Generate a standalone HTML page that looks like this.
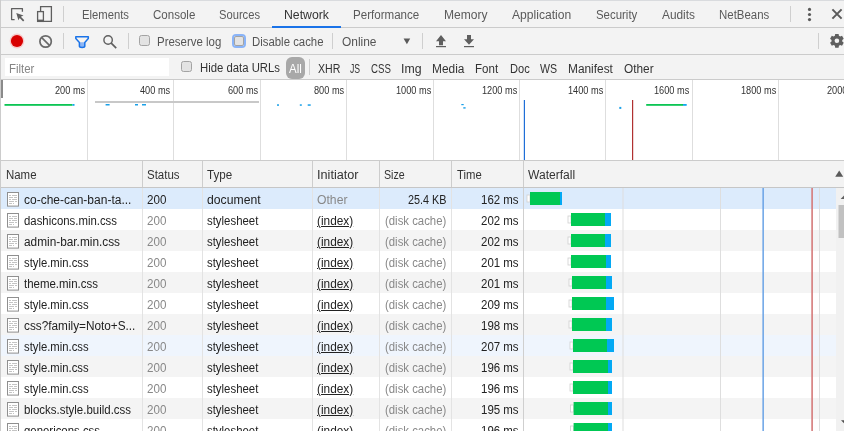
<!DOCTYPE html>
<html><head><meta charset="utf-8"><title>Network</title>
<style>
html,body{margin:0;padding:0}
body{width:844px;height:431px;overflow:hidden;position:relative;background:#fff;font-family:"Liberation Sans",sans-serif}
.a{position:absolute}
.t{position:absolute;white-space:pre;transform-origin:0 0;line-height:normal;font-family:"Liberation Sans",sans-serif}
#tx{position:absolute;left:0;top:0;width:844px;height:431px;will-change:transform}
</style></head><body>
<svg class="a" style="left:0;top:0" width="844" height="431" viewBox="0 0 844 431"><rect x="0" y="0" width="844" height="80" fill="#f3f3f3" />
<rect x="0" y="0" width="844" height="1" fill="#d9dbde" />
<rect x="0" y="27" width="844" height="1" fill="#cbcbcb" />
<rect x="0" y="54" width="844" height="1" fill="#cbcbcb" />
<rect x="0" y="79" width="844" height="1" fill="#cbcbcb" />
<rect x="0" y="80" width="844" height="80" fill="#ffffff" />
<rect x="0" y="160" width="844" height="1" fill="#cbcbcb" />
<rect x="0" y="161" width="844" height="26" fill="#f3f3f3" />
<rect x="0" y="187" width="844" height="1" fill="#c6c6c6" />
<rect x="0" y="188" width="836" height="21" fill="#dcebfc" />
<rect x="0" y="209" width="836" height="21" fill="#ffffff" />
<rect x="0" y="230" width="836" height="21" fill="#f4f4f4" />
<rect x="0" y="251" width="836" height="21" fill="#ffffff" />
<rect x="0" y="272" width="836" height="21" fill="#f4f4f4" />
<rect x="0" y="293" width="836" height="21" fill="#ffffff" />
<rect x="0" y="314" width="836" height="21" fill="#f4f4f4" />
<rect x="0" y="335" width="836" height="21" fill="#eff5fd" />
<rect x="0" y="356" width="836" height="21" fill="#f4f4f4" />
<rect x="0" y="377" width="836" height="21" fill="#ffffff" />
<rect x="0" y="398" width="836" height="21" fill="#f4f4f4" />
<rect x="0" y="419" width="836" height="21" fill="#ffffff" />
<rect x="0" y="0" width="1" height="431" fill="#cccccc" />
<rect x="63" y="6" width="1" height="16" fill="#cfcfcf" />
<rect x="790" y="6" width="1" height="16" fill="#cfcfcf" />
<rect x="63" y="33" width="1" height="16" fill="#cfcfcf" />
<rect x="128" y="33" width="1" height="16" fill="#cfcfcf" />
<rect x="332" y="33" width="1" height="16" fill="#cfcfcf" />
<rect x="422" y="33" width="1" height="16" fill="#cfcfcf" />
<rect x="818" y="33" width="1" height="16" fill="#cfcfcf" />
<rect x="309" y="59" width="1" height="16" fill="#cfcfcf" />
<rect x="272" y="26" width="69" height="2" fill="#1a73e8" />
<path d="M14.6 19.6 H11.6 V8.6 H22.4 V11.8" fill="none" stroke="#5f5f5f" stroke-width="1.3" stroke-linejoin="round"/>
<path d="M16.3 13 L23.5 15.4 L20.9 16.8 L24.3 20.2 L23.1 21.4 L19.7 18 L18.4 20.2 Z" fill="#5f5f5f"/>
<path d="M40.6 11.2 V6.6 H51.4 V21.4 H43.8" fill="none" stroke="#5f5f5f" stroke-width="1.3"/>
<rect x="37.6" y="11.6" width="5.8" height="9.8" fill="none" stroke="#5f5f5f" stroke-width="1.3"/>
<rect x="37" y="19.6" width="7" height="2.4" fill="#5f5f5f" />
<circle cx="809.5" cy="9.4" r="1.6" fill="#5a5a5a"/>
<circle cx="809.5" cy="14.5" r="1.6" fill="#5a5a5a"/>
<circle cx="809.5" cy="19.6" r="1.6" fill="#5a5a5a"/>
<path d="M832.4 9.4 L841.6 18.6 M841.6 9.4 L832.4 18.6" stroke="#5a5a5a" stroke-width="2"/>
<circle cx="17" cy="41" r="7.4" fill="#f6caca"/>
<circle cx="17" cy="41" r="6.1" fill="#d80000"/>
<circle cx="45.6" cy="41.5" r="5.7" fill="none" stroke="#6a6a6a" stroke-width="1.7"/>
<path d="M41.7 37.6 L49.5 45.4" stroke="#6a6a6a" stroke-width="1.7"/>
<path d="M75.9 38.6 H88.3 L84.8 42.4 H79.4 Z" fill="#f8f4ee"/><path d="M79.4 42.2 V46.2 Q79.4 47.4 82.1 47.4 Q84.8 47.4 84.8 46.2 V42.2 Z" fill="#8db6f5"/>
<path d="M75.8 36.7 H88.3 V38.6 L84.8 42.4 V46.2 Q84.8 47.4 82.1 47.4 Q79.4 47.4 79.4 46.2 V42.4 L75.8 38.6 Z" fill="none" stroke="#1a73e8" stroke-width="1.5" stroke-linejoin="round"/>
<circle cx="108.1" cy="40" r="4.2" fill="none" stroke="#5f5f5f" stroke-width="1.4"/>
<path d="M111.2 43.1 L116.2 48.1" stroke="#5f5f5f" stroke-width="1.7"/>
<rect x="139.5" y="35.5" width="10" height="10" rx="2" fill="#e3e3e3" stroke="#a3a3a3" stroke-width="1"/>
<rect x="233" y="35" width="12" height="12" rx="3" fill="none" stroke="#8ab4f8" stroke-width="2"/>
<rect x="234.5" y="36.5" width="9" height="9" rx="1.5" fill="#e3e3e3" stroke="#a3a3a3" stroke-width="1"/>
<rect x="181.5" y="61.5" width="10" height="10" rx="2" fill="#e3e3e3" stroke="#a3a3a3" stroke-width="1"/>
<path d="M403.6 38.4 H410.2 L406.9 44.2 Z" fill="#5a5a5a"/>
<path d="M436 41.2 L441 35 L446 41.2 H443 V45.2 H439 V41.2 Z" fill="#5f5f5f"/>
<rect x="436" y="46" width="10" height="1.2" fill="#5f5f5f" />
<path d="M467 35 H471 V39.2 H474 L469 44.8 L464 39.2 H467 Z" fill="#5f5f5f"/>
<rect x="464" y="46" width="10" height="1.2" fill="#5f5f5f" />
<path d="M835.18 33.91 L838.62 33.91 L838.92 35.79 L840.22 36.54 L842.01 35.87 L843.72 38.84 L842.25 40.05 L842.25 41.55 L843.72 42.76 L842.01 45.73 L840.22 45.06 L838.92 45.81 L838.62 47.69 L835.18 47.69 L834.88 45.81 L833.58 45.06 L831.79 45.73 L830.08 42.76 L831.55 41.55 L831.55 40.05 L830.08 38.84 L831.79 35.87 L833.58 36.54 L834.88 35.79 Z" fill="#5f5f5f"/>
<circle cx="836.9" cy="40.8" r="2.3" fill="#f3f3f3"/>
<rect x="5" y="58" width="164" height="18" fill="#ffffff" />
<rect x="286" y="57" width="19" height="22" rx="6" fill="#a8a8a8"/>
<rect x="87" y="80" width="1" height="80" fill="#dedede" />
<rect x="173" y="80" width="1" height="80" fill="#dedede" />
<rect x="260" y="80" width="1" height="80" fill="#dedede" />
<rect x="346" y="80" width="1" height="80" fill="#dedede" />
<rect x="433" y="80" width="1" height="80" fill="#dedede" />
<rect x="519" y="80" width="1" height="80" fill="#dedede" />
<rect x="605" y="80" width="1" height="80" fill="#dedede" />
<rect x="692" y="80" width="1" height="80" fill="#dedede" />
<rect x="778" y="80" width="1" height="80" fill="#dedede" />
<rect x="1" y="80" width="2" height="18" fill="#8a8a8a" />
<rect x="4.5" y="104" width="68" height="1.8" fill="#0cc554" />
<rect x="72.5" y="104" width="2" height="1.8" fill="#10a6f0" />
<rect x="95" y="101" width="164" height="2" fill="#c8c8c8" />
<rect x="105.6" y="104" width="4" height="1.5" fill="#1aa0e8" />
<rect x="135" y="104" width="3" height="1.5" fill="#1aa0e8" />
<rect x="142" y="104" width="4" height="1.5" fill="#1aa0e8" />
<rect x="277" y="104.3" width="2" height="1.5" fill="#1aa0e8" />
<rect x="299.8" y="104.3" width="2" height="1.5" fill="#1aa0e8" />
<rect x="307.7" y="104.3" width="3" height="1.5" fill="#1aa0e8" />
<rect x="461.3" y="104" width="2.4" height="1.2" fill="#1aa0e8" />
<rect x="463.3" y="107.2" width="2.3" height="1.4" fill="#1aa0e8" />
<rect x="619.3" y="106.9" width="2" height="2" fill="#1aa0e8" />
<rect x="523.8" y="100" width="1.2" height="60" fill="#1f6fd8" />
<rect x="632" y="100" width="1.2" height="60" fill="#b03030" />
<rect x="646.2" y="104" width="36.8" height="1.8" fill="#0cc554" />
<rect x="683" y="104" width="3.7" height="1.8" fill="#10a6f0" />
<rect x="142" y="161" width="1" height="26" fill="#cdcdcd" />
<rect x="142" y="188" width="1" height="243" fill="#e3e3e3" />
<rect x="202" y="161" width="1" height="26" fill="#cdcdcd" />
<rect x="202" y="188" width="1" height="243" fill="#e3e3e3" />
<rect x="312" y="161" width="1" height="26" fill="#cdcdcd" />
<rect x="312" y="188" width="1" height="243" fill="#e3e3e3" />
<rect x="379" y="161" width="1" height="26" fill="#cdcdcd" />
<rect x="379" y="188" width="1" height="243" fill="#e3e3e3" />
<rect x="451" y="161" width="1" height="26" fill="#cdcdcd" />
<rect x="451" y="188" width="1" height="243" fill="#e3e3e3" />
<rect x="523" y="161" width="1" height="26" fill="#cdcdcd" />
<rect x="523" y="188" width="1" height="243" fill="#cfcfcf" />
<rect x="622.5" y="188" width="1" height="243" fill="#dedede" />
<rect x="720" y="188" width="1" height="243" fill="#dedede" />
<rect x="819" y="188" width="1" height="243" fill="#dedede" />
<rect x="762.4" y="188" width="1.5" height="243" fill="#6aa3e6" />
<rect x="811.3" y="188" width="1.6" height="243" fill="#d57b7b" />
<path d="M835.2 176.7 L839.2 170.4 L843.2 176.7 Z" fill="#5a5a5a"/>
<rect x="836" y="188" width="8" height="243" fill="#f1f1f1" />
<path d="M840.6 199 L844.2 195.4 L847.8 199 Z" fill="#606060"/>
<rect x="838.5" y="205" width="5.5" height="33" fill="#c1c1c1" />
<path d="M841 420.2 H844 V423.2 Z" fill="#505050"/>
<rect x="527" y="195" width="3" height="7" fill="#ffffff" stroke="#cfcfcf" stroke-width="0.8"/>
<rect x="530" y="192" width="30" height="13" fill="#00c853" />
<rect x="560" y="192" width="2" height="13" fill="#03a9f4" />
<rect x="568" y="216" width="3" height="7" fill="#ffffff" stroke="#cfcfcf" stroke-width="0.8"/>
<rect x="571" y="213" width="34" height="13" fill="#00c853" />
<rect x="605" y="213" width="6" height="13" fill="#03a9f4" />
<rect x="568" y="237" width="3" height="7" fill="#ffffff" stroke="#cfcfcf" stroke-width="0.8"/>
<rect x="571" y="234" width="34" height="13" fill="#00c853" />
<rect x="605" y="234" width="6" height="13" fill="#03a9f4" />
<rect x="568" y="258" width="3" height="7" fill="#ffffff" stroke="#cfcfcf" stroke-width="0.8"/>
<rect x="571" y="255" width="35" height="13" fill="#00c853" />
<rect x="606" y="255" width="5" height="13" fill="#03a9f4" />
<rect x="569" y="279" width="3" height="7" fill="#ffffff" stroke="#cfcfcf" stroke-width="0.8"/>
<rect x="572" y="276" width="34" height="13" fill="#00c853" />
<rect x="606" y="276" width="6" height="13" fill="#03a9f4" />
<rect x="569" y="300" width="3" height="7" fill="#ffffff" stroke="#cfcfcf" stroke-width="0.8"/>
<rect x="572" y="297" width="34" height="13" fill="#00c853" />
<rect x="606" y="297" width="8" height="13" fill="#03a9f4" />
<rect x="569" y="321" width="3" height="7" fill="#ffffff" stroke="#cfcfcf" stroke-width="0.8"/>
<rect x="572" y="318" width="34" height="13" fill="#00c853" />
<rect x="606" y="318" width="6" height="13" fill="#03a9f4" />
<rect x="570" y="342" width="3" height="7" fill="#ffffff" stroke="#cfcfcf" stroke-width="0.8"/>
<rect x="573" y="339" width="34" height="13" fill="#00c853" />
<rect x="607" y="339" width="7" height="13" fill="#03a9f4" />
<rect x="570" y="363" width="3" height="7" fill="#ffffff" stroke="#cfcfcf" stroke-width="0.8"/>
<rect x="573" y="360" width="35" height="13" fill="#00c853" />
<rect x="608" y="360" width="4" height="13" fill="#03a9f4" />
<rect x="570" y="384" width="3" height="7" fill="#ffffff" stroke="#cfcfcf" stroke-width="0.8"/>
<rect x="573" y="381" width="35" height="13" fill="#00c853" />
<rect x="608" y="381" width="4" height="13" fill="#03a9f4" />
<rect x="570.6" y="405" width="3" height="7" fill="#ffffff" stroke="#cfcfcf" stroke-width="0.8"/>
<rect x="573.6" y="402" width="34.39999999999998" height="13" fill="#00c853" />
<rect x="608" y="402" width="4" height="13" fill="#03a9f4" />
<rect x="570.6" y="426" width="3" height="7" fill="#ffffff" stroke="#cfcfcf" stroke-width="0.8"/>
<rect x="573.6" y="423" width="34.39999999999998" height="13" fill="#00c853" />
<rect x="608" y="423" width="4" height="13" fill="#03a9f4" />
<rect x="7.5" y="192.5" width="11" height="13.6" fill="#ffffff" stroke="#8f8f8f" stroke-width="1"/>
<rect x="9.0" y="195.0" width="2.0" height="1" fill="#c4c4c4" />
<rect x="12.0" y="195.0" width="5.0" height="1" fill="#c4c4c4" />
<rect x="9.0" y="197.0" width="4.0" height="1" fill="#c4c4c4" />
<rect x="14.0" y="197.0" width="3.0" height="1" fill="#c4c4c4" />
<rect x="9.0" y="199.0" width="2.0" height="1" fill="#c4c4c4" />
<rect x="12.0" y="199.0" width="5.0" height="1" fill="#c4c4c4" />
<rect x="9.0" y="201.0" width="5.0" height="1" fill="#c4c4c4" />
<rect x="15.0" y="201.0" width="2.0" height="1" fill="#c4c4c4" />
<rect x="9.0" y="203.0" width="3.0" height="1" fill="#c4c4c4" />
<rect x="13.0" y="203.0" width="1.0" height="1" fill="#c4c4c4" />
<rect x="7.5" y="213.5" width="11" height="13.6" fill="#ffffff" stroke="#8f8f8f" stroke-width="1"/>
<rect x="9.0" y="216.0" width="2.0" height="1" fill="#c4c4c4" />
<rect x="12.0" y="216.0" width="5.0" height="1" fill="#c4c4c4" />
<rect x="9.0" y="218.0" width="4.0" height="1" fill="#c4c4c4" />
<rect x="14.0" y="218.0" width="3.0" height="1" fill="#c4c4c4" />
<rect x="9.0" y="220.0" width="2.0" height="1" fill="#c4c4c4" />
<rect x="12.0" y="220.0" width="5.0" height="1" fill="#c4c4c4" />
<rect x="9.0" y="222.0" width="5.0" height="1" fill="#c4c4c4" />
<rect x="15.0" y="222.0" width="2.0" height="1" fill="#c4c4c4" />
<rect x="9.0" y="224.0" width="3.0" height="1" fill="#c4c4c4" />
<rect x="13.0" y="224.0" width="1.0" height="1" fill="#c4c4c4" />
<rect x="7.5" y="234.5" width="11" height="13.6" fill="#ffffff" stroke="#8f8f8f" stroke-width="1"/>
<rect x="9.0" y="237.0" width="2.0" height="1" fill="#c4c4c4" />
<rect x="12.0" y="237.0" width="5.0" height="1" fill="#c4c4c4" />
<rect x="9.0" y="239.0" width="4.0" height="1" fill="#c4c4c4" />
<rect x="14.0" y="239.0" width="3.0" height="1" fill="#c4c4c4" />
<rect x="9.0" y="241.0" width="2.0" height="1" fill="#c4c4c4" />
<rect x="12.0" y="241.0" width="5.0" height="1" fill="#c4c4c4" />
<rect x="9.0" y="243.0" width="5.0" height="1" fill="#c4c4c4" />
<rect x="15.0" y="243.0" width="2.0" height="1" fill="#c4c4c4" />
<rect x="9.0" y="245.0" width="3.0" height="1" fill="#c4c4c4" />
<rect x="13.0" y="245.0" width="1.0" height="1" fill="#c4c4c4" />
<rect x="7.5" y="255.5" width="11" height="13.6" fill="#ffffff" stroke="#8f8f8f" stroke-width="1"/>
<rect x="9.0" y="258.0" width="2.0" height="1" fill="#c4c4c4" />
<rect x="12.0" y="258.0" width="5.0" height="1" fill="#c4c4c4" />
<rect x="9.0" y="260.0" width="4.0" height="1" fill="#c4c4c4" />
<rect x="14.0" y="260.0" width="3.0" height="1" fill="#c4c4c4" />
<rect x="9.0" y="262.0" width="2.0" height="1" fill="#c4c4c4" />
<rect x="12.0" y="262.0" width="5.0" height="1" fill="#c4c4c4" />
<rect x="9.0" y="264.0" width="5.0" height="1" fill="#c4c4c4" />
<rect x="15.0" y="264.0" width="2.0" height="1" fill="#c4c4c4" />
<rect x="9.0" y="266.0" width="3.0" height="1" fill="#c4c4c4" />
<rect x="13.0" y="266.0" width="1.0" height="1" fill="#c4c4c4" />
<rect x="7.5" y="276.5" width="11" height="13.6" fill="#ffffff" stroke="#8f8f8f" stroke-width="1"/>
<rect x="9.0" y="279.0" width="2.0" height="1" fill="#c4c4c4" />
<rect x="12.0" y="279.0" width="5.0" height="1" fill="#c4c4c4" />
<rect x="9.0" y="281.0" width="4.0" height="1" fill="#c4c4c4" />
<rect x="14.0" y="281.0" width="3.0" height="1" fill="#c4c4c4" />
<rect x="9.0" y="283.0" width="2.0" height="1" fill="#c4c4c4" />
<rect x="12.0" y="283.0" width="5.0" height="1" fill="#c4c4c4" />
<rect x="9.0" y="285.0" width="5.0" height="1" fill="#c4c4c4" />
<rect x="15.0" y="285.0" width="2.0" height="1" fill="#c4c4c4" />
<rect x="9.0" y="287.0" width="3.0" height="1" fill="#c4c4c4" />
<rect x="13.0" y="287.0" width="1.0" height="1" fill="#c4c4c4" />
<rect x="7.5" y="297.5" width="11" height="13.6" fill="#ffffff" stroke="#8f8f8f" stroke-width="1"/>
<rect x="9.0" y="300.0" width="2.0" height="1" fill="#c4c4c4" />
<rect x="12.0" y="300.0" width="5.0" height="1" fill="#c4c4c4" />
<rect x="9.0" y="302.0" width="4.0" height="1" fill="#c4c4c4" />
<rect x="14.0" y="302.0" width="3.0" height="1" fill="#c4c4c4" />
<rect x="9.0" y="304.0" width="2.0" height="1" fill="#c4c4c4" />
<rect x="12.0" y="304.0" width="5.0" height="1" fill="#c4c4c4" />
<rect x="9.0" y="306.0" width="5.0" height="1" fill="#c4c4c4" />
<rect x="15.0" y="306.0" width="2.0" height="1" fill="#c4c4c4" />
<rect x="9.0" y="308.0" width="3.0" height="1" fill="#c4c4c4" />
<rect x="13.0" y="308.0" width="1.0" height="1" fill="#c4c4c4" />
<rect x="7.5" y="318.5" width="11" height="13.6" fill="#ffffff" stroke="#8f8f8f" stroke-width="1"/>
<rect x="9.0" y="321.0" width="2.0" height="1" fill="#c4c4c4" />
<rect x="12.0" y="321.0" width="5.0" height="1" fill="#c4c4c4" />
<rect x="9.0" y="323.0" width="4.0" height="1" fill="#c4c4c4" />
<rect x="14.0" y="323.0" width="3.0" height="1" fill="#c4c4c4" />
<rect x="9.0" y="325.0" width="2.0" height="1" fill="#c4c4c4" />
<rect x="12.0" y="325.0" width="5.0" height="1" fill="#c4c4c4" />
<rect x="9.0" y="327.0" width="5.0" height="1" fill="#c4c4c4" />
<rect x="15.0" y="327.0" width="2.0" height="1" fill="#c4c4c4" />
<rect x="9.0" y="329.0" width="3.0" height="1" fill="#c4c4c4" />
<rect x="13.0" y="329.0" width="1.0" height="1" fill="#c4c4c4" />
<rect x="7.5" y="339.5" width="11" height="13.6" fill="#ffffff" stroke="#8f8f8f" stroke-width="1"/>
<rect x="9.0" y="342.0" width="2.0" height="1" fill="#c4c4c4" />
<rect x="12.0" y="342.0" width="5.0" height="1" fill="#c4c4c4" />
<rect x="9.0" y="344.0" width="4.0" height="1" fill="#c4c4c4" />
<rect x="14.0" y="344.0" width="3.0" height="1" fill="#c4c4c4" />
<rect x="9.0" y="346.0" width="2.0" height="1" fill="#c4c4c4" />
<rect x="12.0" y="346.0" width="5.0" height="1" fill="#c4c4c4" />
<rect x="9.0" y="348.0" width="5.0" height="1" fill="#c4c4c4" />
<rect x="15.0" y="348.0" width="2.0" height="1" fill="#c4c4c4" />
<rect x="9.0" y="350.0" width="3.0" height="1" fill="#c4c4c4" />
<rect x="13.0" y="350.0" width="1.0" height="1" fill="#c4c4c4" />
<rect x="7.5" y="360.5" width="11" height="13.6" fill="#ffffff" stroke="#8f8f8f" stroke-width="1"/>
<rect x="9.0" y="363.0" width="2.0" height="1" fill="#c4c4c4" />
<rect x="12.0" y="363.0" width="5.0" height="1" fill="#c4c4c4" />
<rect x="9.0" y="365.0" width="4.0" height="1" fill="#c4c4c4" />
<rect x="14.0" y="365.0" width="3.0" height="1" fill="#c4c4c4" />
<rect x="9.0" y="367.0" width="2.0" height="1" fill="#c4c4c4" />
<rect x="12.0" y="367.0" width="5.0" height="1" fill="#c4c4c4" />
<rect x="9.0" y="369.0" width="5.0" height="1" fill="#c4c4c4" />
<rect x="15.0" y="369.0" width="2.0" height="1" fill="#c4c4c4" />
<rect x="9.0" y="371.0" width="3.0" height="1" fill="#c4c4c4" />
<rect x="13.0" y="371.0" width="1.0" height="1" fill="#c4c4c4" />
<rect x="7.5" y="381.5" width="11" height="13.6" fill="#ffffff" stroke="#8f8f8f" stroke-width="1"/>
<rect x="9.0" y="384.0" width="2.0" height="1" fill="#c4c4c4" />
<rect x="12.0" y="384.0" width="5.0" height="1" fill="#c4c4c4" />
<rect x="9.0" y="386.0" width="4.0" height="1" fill="#c4c4c4" />
<rect x="14.0" y="386.0" width="3.0" height="1" fill="#c4c4c4" />
<rect x="9.0" y="388.0" width="2.0" height="1" fill="#c4c4c4" />
<rect x="12.0" y="388.0" width="5.0" height="1" fill="#c4c4c4" />
<rect x="9.0" y="390.0" width="5.0" height="1" fill="#c4c4c4" />
<rect x="15.0" y="390.0" width="2.0" height="1" fill="#c4c4c4" />
<rect x="9.0" y="392.0" width="3.0" height="1" fill="#c4c4c4" />
<rect x="13.0" y="392.0" width="1.0" height="1" fill="#c4c4c4" />
<rect x="7.5" y="402.5" width="11" height="13.6" fill="#ffffff" stroke="#8f8f8f" stroke-width="1"/>
<rect x="9.0" y="405.0" width="2.0" height="1" fill="#c4c4c4" />
<rect x="12.0" y="405.0" width="5.0" height="1" fill="#c4c4c4" />
<rect x="9.0" y="407.0" width="4.0" height="1" fill="#c4c4c4" />
<rect x="14.0" y="407.0" width="3.0" height="1" fill="#c4c4c4" />
<rect x="9.0" y="409.0" width="2.0" height="1" fill="#c4c4c4" />
<rect x="12.0" y="409.0" width="5.0" height="1" fill="#c4c4c4" />
<rect x="9.0" y="411.0" width="5.0" height="1" fill="#c4c4c4" />
<rect x="15.0" y="411.0" width="2.0" height="1" fill="#c4c4c4" />
<rect x="9.0" y="413.0" width="3.0" height="1" fill="#c4c4c4" />
<rect x="13.0" y="413.0" width="1.0" height="1" fill="#c4c4c4" />
<rect x="7.5" y="423.5" width="11" height="13.6" fill="#ffffff" stroke="#8f8f8f" stroke-width="1"/>
<rect x="9.0" y="426.0" width="2.0" height="1" fill="#c4c4c4" />
<rect x="12.0" y="426.0" width="5.0" height="1" fill="#c4c4c4" />
<rect x="9.0" y="428.0" width="4.0" height="1" fill="#c4c4c4" />
<rect x="14.0" y="428.0" width="3.0" height="1" fill="#c4c4c4" />
<rect x="9.0" y="430.0" width="2.0" height="1" fill="#c4c4c4" />
<rect x="12.0" y="430.0" width="5.0" height="1" fill="#c4c4c4" />
<rect x="9.0" y="432.0" width="5.0" height="1" fill="#c4c4c4" />
<rect x="15.0" y="432.0" width="2.0" height="1" fill="#c4c4c4" />
<rect x="9.0" y="434.0" width="3.0" height="1" fill="#c4c4c4" />
<rect x="13.0" y="434.0" width="1.0" height="1" fill="#c4c4c4" /></svg>
<div id="tx">
<div class=t style='left:82.00px;top:8.00px;font-size:12px;color:#5a5a5a;transform:scaleX(0.9394);'>Elements</div>
<div class=t style='left:152.60px;top:8.00px;font-size:12px;color:#5a5a5a;transform:scaleX(0.9607);'>Console</div>
<div class=t style='left:218.60px;top:8.00px;font-size:12px;color:#5a5a5a;transform:scaleX(0.9312);'>Sources</div>
<div class=t style='left:283.80px;top:8.00px;font-size:12px;color:#333;transform:scaleX(1.0201);'>Network</div>
<div class=t style='left:352.80px;top:8.00px;font-size:12px;color:#5a5a5a;transform:scaleX(0.9650);'>Performance</div>
<div class=t style='left:444.20px;top:8.00px;font-size:12px;color:#5a5a5a;transform:scaleX(1.0036);'>Memory</div>
<div class=t style='left:512.10px;top:8.00px;font-size:12px;color:#5a5a5a;transform:scaleX(1.0082);'>Application</div>
<div class=t style='left:596.00px;top:8.00px;font-size:12px;color:#5a5a5a;transform:scaleX(0.9525);'>Security</div>
<div class=t style='left:662.20px;top:8.00px;font-size:12px;color:#5a5a5a;transform:scaleX(0.9892);'>Audits</div>
<div class=t style='left:718.70px;top:8.00px;font-size:12px;color:#5a5a5a;transform:scaleX(0.9544);'>NetBeans</div>
<div class=t style='left:157.40px;top:34.60px;font-size:12px;color:#555;transform:scaleX(0.9544);'>Preserve log</div>
<div class=t style='left:251.60px;top:34.60px;font-size:12px;color:#555;transform:scaleX(0.9486);'>Disable cache</div>
<div class=t style='left:342.30px;top:35.00px;font-size:12px;color:#555;transform:scaleX(0.9946);'>Online</div>
<div class=t style='left:8.70px;top:62.00px;font-size:12px;color:#858585;transform:scaleX(0.9523);'>Filter</div>
<div class=t style='left:199.60px;top:61.00px;font-size:12px;color:#333;transform:scaleX(0.9443);'>Hide data URLs</div>
<div class=t style='left:289.20px;top:62.00px;font-size:12px;color:#fff;transform:scaleX(0.9593);'>All</div>
<div class=t style='left:317.80px;top:62.00px;font-size:12px;color:#333;transform:scaleX(0.8838);'>XHR</div>
<div class=t style='left:350.40px;top:62.00px;font-size:12px;color:#333;transform:scaleX(0.7206);'>JS</div>
<div class=t style='left:371.30px;top:62.00px;font-size:12px;color:#333;transform:scaleX(0.8061);'>CSS</div>
<div class=t style='left:401.00px;top:62.00px;font-size:12px;color:#333;transform:scaleX(1.0242);'>Img</div>
<div class=t style='left:432.30px;top:62.00px;font-size:12px;color:#333;transform:scaleX(0.9912);'>Media</div>
<div class=t style='left:475.20px;top:62.00px;font-size:12px;color:#333;transform:scaleX(0.9619);'>Font</div>
<div class=t style='left:509.50px;top:62.00px;font-size:12px;color:#333;transform:scaleX(0.9230);'>Doc</div>
<div class=t style='left:539.70px;top:62.00px;font-size:12px;color:#333;transform:scaleX(0.8840);'>WS</div>
<div class=t style='left:567.90px;top:62.00px;font-size:12px;color:#333;transform:scaleX(0.9899);'>Manifest</div>
<div class=t style='left:623.50px;top:62.00px;font-size:12px;color:#333;transform:scaleX(0.9862);'>Other</div>
<div class=t style='left:54.83px;top:85.00px;font-size:10px;color:#333;transform:scaleX(0.9200);'>200 ms</div>
<div class=t style='left:140.43px;top:85.00px;font-size:10px;color:#333;transform:scaleX(0.9200);'>400 ms</div>
<div class=t style='left:227.73px;top:85.00px;font-size:10px;color:#333;transform:scaleX(0.9200);'>600 ms</div>
<div class=t style='left:313.63px;top:85.00px;font-size:10px;color:#333;transform:scaleX(0.9200);'>800 ms</div>
<div class=t style='left:395.81px;top:85.00px;font-size:10px;color:#333;transform:scaleX(0.9200);'>1000 ms</div>
<div class=t style='left:481.81px;top:85.00px;font-size:10px;color:#333;transform:scaleX(0.9200);'>1200 ms</div>
<div class=t style='left:567.61px;top:85.00px;font-size:10px;color:#333;transform:scaleX(0.9200);'>1400 ms</div>
<div class=t style='left:654.41px;top:85.00px;font-size:10px;color:#333;transform:scaleX(0.9200);'>1600 ms</div>
<div class=t style='left:740.81px;top:85.00px;font-size:10px;color:#333;transform:scaleX(0.9200);'>1800 ms</div>
<div class=t style='left:827.21px;top:85.00px;font-size:10px;color:#333;transform:scaleX(0.9200);'>2000 ms</div>
<div class=t style='left:5.70px;top:168.00px;font-size:12px;color:#333;transform:scaleX(0.9527);'>Name</div>
<div class=t style='left:146.80px;top:168.00px;font-size:12px;color:#333;transform:scaleX(0.9579);'>Status</div>
<div class=t style='left:207.20px;top:168.00px;font-size:12px;color:#333;transform:scaleX(0.9686);'>Type</div>
<div class=t style='left:316.50px;top:168.00px;font-size:12px;color:#333;transform:scaleX(1.0569);'>Initiator</div>
<div class=t style='left:384.20px;top:168.00px;font-size:12px;color:#333;transform:scaleX(0.8867);'>Size</div>
<div class=t style='left:456.60px;top:168.00px;font-size:12px;color:#333;transform:scaleX(0.9415);'>Time</div>
<div class=t style='left:528.10px;top:168.00px;font-size:12px;color:#333;transform:scaleX(1.0041);'>Waterfall</div>
<div class=t style='left:24.20px;top:192.50px;font-size:12px;color:#222;transform:scaleX(1.0001);'>co-che-can-ban-ta...</div>
<div class=t style='left:146.80px;top:192.50px;font-size:12px;color:#222;transform:scaleX(0.9685);'>200</div>
<div class=t style='left:207.20px;top:192.50px;font-size:12px;color:#222;transform:scaleX(1.0170);'>document</div>
<div class=t style='left:316.50px;top:192.50px;font-size:12px;color:#888;transform:scaleX(1.0161);'>Other</div>
<div class=t style='left:408.10px;top:192.50px;font-size:12px;color:#222;transform:scaleX(0.9016);'>25.4 KB</div>
<div class=t style='left:481.30px;top:192.50px;font-size:12px;color:#222;transform:scaleX(0.9553);'>162 ms</div>
<div class=t style='left:24.20px;top:213.50px;font-size:12px;color:#222;transform:scaleX(0.9485);'>dashicons.min.css</div>
<div class=t style='left:146.80px;top:213.50px;font-size:12px;color:#888;transform:scaleX(0.9685);'>200</div>
<div class=t style='left:207.20px;top:213.50px;font-size:12px;color:#222;transform:scaleX(0.9500);'>stylesheet</div>
<div class=t style='left:316.90px;top:213.50px;font-size:12px;color:#222;transform:scaleX(0.9867);text-decoration:underline;'>(index)</div>
<div class=t style='left:385.30px;top:213.50px;font-size:12px;color:#888;transform:scaleX(0.9476);'>(disk cache)</div>
<div class=t style='left:481.30px;top:213.50px;font-size:12px;color:#222;transform:scaleX(0.9553);'>202 ms</div>
<div class=t style='left:24.20px;top:234.50px;font-size:12px;color:#222;transform:scaleX(0.9859);'>admin-bar.min.css</div>
<div class=t style='left:146.80px;top:234.50px;font-size:12px;color:#888;transform:scaleX(0.9685);'>200</div>
<div class=t style='left:207.20px;top:234.50px;font-size:12px;color:#222;transform:scaleX(0.9500);'>stylesheet</div>
<div class=t style='left:316.90px;top:234.50px;font-size:12px;color:#222;transform:scaleX(0.9867);text-decoration:underline;'>(index)</div>
<div class=t style='left:385.30px;top:234.50px;font-size:12px;color:#888;transform:scaleX(0.9476);'>(disk cache)</div>
<div class=t style='left:481.30px;top:234.50px;font-size:12px;color:#222;transform:scaleX(0.9553);'>202 ms</div>
<div class=t style='left:24.20px;top:255.50px;font-size:12px;color:#222;transform:scaleX(0.9405);'>style.min.css</div>
<div class=t style='left:146.80px;top:255.50px;font-size:12px;color:#888;transform:scaleX(0.9685);'>200</div>
<div class=t style='left:207.20px;top:255.50px;font-size:12px;color:#222;transform:scaleX(0.9500);'>stylesheet</div>
<div class=t style='left:316.90px;top:255.50px;font-size:12px;color:#222;transform:scaleX(0.9867);text-decoration:underline;'>(index)</div>
<div class=t style='left:385.30px;top:255.50px;font-size:12px;color:#888;transform:scaleX(0.9476);'>(disk cache)</div>
<div class=t style='left:481.30px;top:255.50px;font-size:12px;color:#222;transform:scaleX(0.9553);'>201 ms</div>
<div class=t style='left:24.20px;top:276.50px;font-size:12px;color:#222;transform:scaleX(0.9553);'>theme.min.css</div>
<div class=t style='left:146.80px;top:276.50px;font-size:12px;color:#888;transform:scaleX(0.9685);'>200</div>
<div class=t style='left:207.20px;top:276.50px;font-size:12px;color:#222;transform:scaleX(0.9500);'>stylesheet</div>
<div class=t style='left:316.90px;top:276.50px;font-size:12px;color:#222;transform:scaleX(0.9867);text-decoration:underline;'>(index)</div>
<div class=t style='left:385.30px;top:276.50px;font-size:12px;color:#888;transform:scaleX(0.9476);'>(disk cache)</div>
<div class=t style='left:481.30px;top:276.50px;font-size:12px;color:#222;transform:scaleX(0.9553);'>201 ms</div>
<div class=t style='left:24.20px;top:297.50px;font-size:12px;color:#222;transform:scaleX(0.9405);'>style.min.css</div>
<div class=t style='left:146.80px;top:297.50px;font-size:12px;color:#888;transform:scaleX(0.9685);'>200</div>
<div class=t style='left:207.20px;top:297.50px;font-size:12px;color:#222;transform:scaleX(0.9500);'>stylesheet</div>
<div class=t style='left:316.90px;top:297.50px;font-size:12px;color:#222;transform:scaleX(0.9867);text-decoration:underline;'>(index)</div>
<div class=t style='left:385.30px;top:297.50px;font-size:12px;color:#888;transform:scaleX(0.9476);'>(disk cache)</div>
<div class=t style='left:481.30px;top:297.50px;font-size:12px;color:#222;transform:scaleX(0.9553);'>209 ms</div>
<div class=t style='left:24.20px;top:318.50px;font-size:12px;color:#222;transform:scaleX(0.9824);'>css?family=Noto+S...</div>
<div class=t style='left:146.80px;top:318.50px;font-size:12px;color:#888;transform:scaleX(0.9685);'>200</div>
<div class=t style='left:207.20px;top:318.50px;font-size:12px;color:#222;transform:scaleX(0.9500);'>stylesheet</div>
<div class=t style='left:316.90px;top:318.50px;font-size:12px;color:#222;transform:scaleX(0.9867);text-decoration:underline;'>(index)</div>
<div class=t style='left:385.30px;top:318.50px;font-size:12px;color:#888;transform:scaleX(0.9476);'>(disk cache)</div>
<div class=t style='left:481.30px;top:318.50px;font-size:12px;color:#222;transform:scaleX(0.9553);'>198 ms</div>
<div class=t style='left:24.20px;top:339.50px;font-size:12px;color:#222;transform:scaleX(0.9405);'>style.min.css</div>
<div class=t style='left:146.80px;top:339.50px;font-size:12px;color:#888;transform:scaleX(0.9685);'>200</div>
<div class=t style='left:207.20px;top:339.50px;font-size:12px;color:#222;transform:scaleX(0.9500);'>stylesheet</div>
<div class=t style='left:316.90px;top:339.50px;font-size:12px;color:#222;transform:scaleX(0.9867);text-decoration:underline;'>(index)</div>
<div class=t style='left:385.30px;top:339.50px;font-size:12px;color:#888;transform:scaleX(0.9476);'>(disk cache)</div>
<div class=t style='left:481.30px;top:339.50px;font-size:12px;color:#222;transform:scaleX(0.9553);'>207 ms</div>
<div class=t style='left:24.20px;top:360.50px;font-size:12px;color:#222;transform:scaleX(0.9405);'>style.min.css</div>
<div class=t style='left:146.80px;top:360.50px;font-size:12px;color:#888;transform:scaleX(0.9685);'>200</div>
<div class=t style='left:207.20px;top:360.50px;font-size:12px;color:#222;transform:scaleX(0.9500);'>stylesheet</div>
<div class=t style='left:316.90px;top:360.50px;font-size:12px;color:#222;transform:scaleX(0.9867);text-decoration:underline;'>(index)</div>
<div class=t style='left:385.30px;top:360.50px;font-size:12px;color:#888;transform:scaleX(0.9476);'>(disk cache)</div>
<div class=t style='left:481.30px;top:360.50px;font-size:12px;color:#222;transform:scaleX(0.9553);'>196 ms</div>
<div class=t style='left:24.20px;top:381.50px;font-size:12px;color:#222;transform:scaleX(0.9405);'>style.min.css</div>
<div class=t style='left:146.80px;top:381.50px;font-size:12px;color:#888;transform:scaleX(0.9685);'>200</div>
<div class=t style='left:207.20px;top:381.50px;font-size:12px;color:#222;transform:scaleX(0.9500);'>stylesheet</div>
<div class=t style='left:316.90px;top:381.50px;font-size:12px;color:#222;transform:scaleX(0.9867);text-decoration:underline;'>(index)</div>
<div class=t style='left:385.30px;top:381.50px;font-size:12px;color:#888;transform:scaleX(0.9476);'>(disk cache)</div>
<div class=t style='left:481.30px;top:381.50px;font-size:12px;color:#222;transform:scaleX(0.9553);'>196 ms</div>
<div class=t style='left:24.20px;top:402.50px;font-size:12px;color:#222;transform:scaleX(0.9550);'>blocks.style.build.css</div>
<div class=t style='left:146.80px;top:402.50px;font-size:12px;color:#888;transform:scaleX(0.9685);'>200</div>
<div class=t style='left:207.20px;top:402.50px;font-size:12px;color:#222;transform:scaleX(0.9500);'>stylesheet</div>
<div class=t style='left:316.90px;top:402.50px;font-size:12px;color:#222;transform:scaleX(0.9867);text-decoration:underline;'>(index)</div>
<div class=t style='left:385.30px;top:402.50px;font-size:12px;color:#888;transform:scaleX(0.9476);'>(disk cache)</div>
<div class=t style='left:481.30px;top:402.50px;font-size:12px;color:#222;transform:scaleX(0.9553);'>195 ms</div>
<div class=t style='left:24.20px;top:423.50px;font-size:12px;color:#222;transform:scaleX(0.9494);'>genericons.css</div>
<div class=t style='left:146.80px;top:423.50px;font-size:12px;color:#888;transform:scaleX(0.9685);'>200</div>
<div class=t style='left:207.20px;top:423.50px;font-size:12px;color:#222;transform:scaleX(0.9500);'>stylesheet</div>
<div class=t style='left:316.90px;top:423.50px;font-size:12px;color:#222;transform:scaleX(0.9867);text-decoration:underline;'>(index)</div>
<div class=t style='left:385.30px;top:423.50px;font-size:12px;color:#888;transform:scaleX(0.9476);'>(disk cache)</div>
<div class=t style='left:481.30px;top:423.50px;font-size:12px;color:#222;transform:scaleX(0.9553);'>196 ms</div>
</div>
</body></html>
